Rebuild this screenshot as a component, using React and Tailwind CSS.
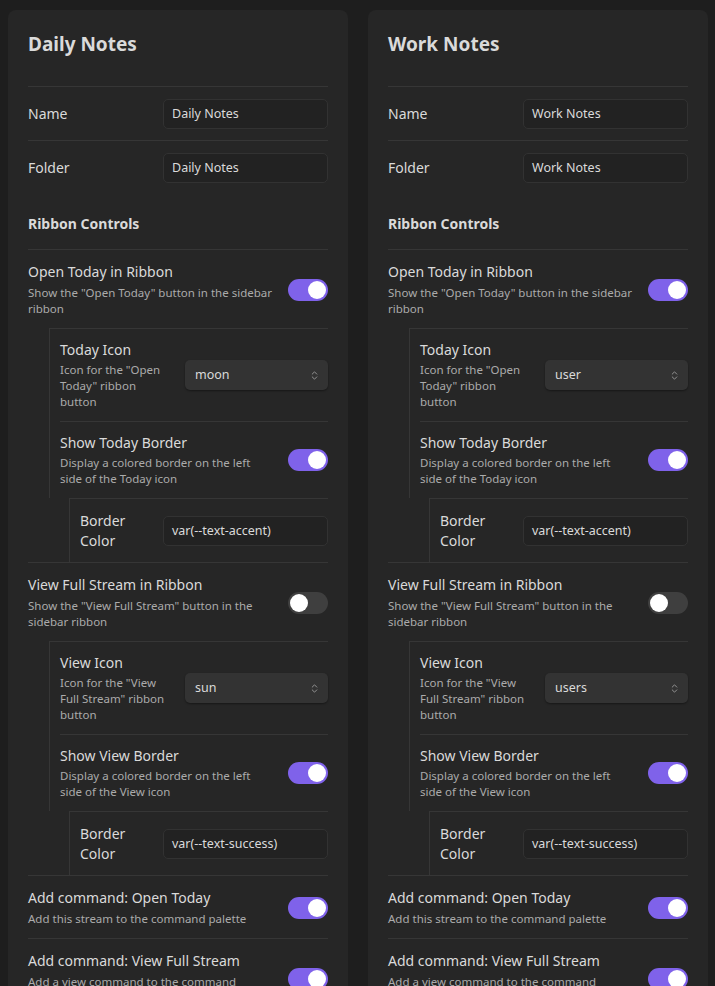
import { ChevronsUpDown } from "lucide-react";

const Toggle = ({ on }) => (
  <div
    className={`flex h-[22px] w-10 shrink-0 items-center rounded-full p-[2px] ${
      on ? "justify-end bg-[#7f62ea]" : "justify-start bg-[#3f3f3f]"
    }`}
  >
    <div className="h-[18px] w-[18px] rounded-full bg-white" />
  </div>
);

const TextInput = ({ value }) => (
  <div className="flex h-[30px] w-[165px] shrink-0 items-center rounded-[5px] border border-[#323232] bg-[#222222] px-2 text-[12.5px] text-[#dadada]">
    {value}
  </div>
);

const Select = ({ value }) => (
  <div className="flex h-[30px] w-[143px] shrink-0 items-center justify-between rounded-[5px] bg-[#333333] pl-[10px] pr-2 text-[12.5px] text-[#dadada] shadow-[0_1px_2px_rgba(0,0,0,0.4)]">
    <span>{value}</span>
    <ChevronsUpDown size={11} strokeWidth={2} className="text-[#9a9a9a]" />
  </div>
);

// nested rows sit a little tighter than the top level ones
const Setting = ({ title, desc, control, border = true, nested = false }) => (
  <div
    className={`flex items-center gap-4 ${nested ? "py-[11px]" : "pt-3 pb-[11px]"} ${
      border ? "border-t border-[#363636]" : ""
    }`}
  >
    <div className="min-w-0 flex-1">
      {title.map((t) => (
        <div key={t} className="whitespace-nowrap text-[14px] leading-5 text-[#dadada]">
          {t}
        </div>
      ))}
      {desc && (
        <div
          className={`${nested ? "mt-[2px]" : "mt-[3px]"} text-[11.5px] leading-4 text-[#ababab]`}
        >
          {desc.map((d) => (
            <div key={d} className="whitespace-nowrap">
              {d}
            </div>
          ))}
        </div>
      )}
    </div>
    {control}
  </div>
);

const Group = ({ inner, children }) => (
  <div
    className={`border-l border-t border-[#363636] pl-[10px] ${
      inner ? "ml-[41px]" : "ml-[21px]"
    }`}
  >
    {children}
  </div>
);

const NoteCard = ({ name, todayIcon, viewIcon }) => (
  <div className="w-[340px] shrink-0 rounded-lg bg-[#262626] px-5 pt-5 pb-6">
    <h2 className="mb-7 text-[19px] font-bold leading-7 text-[#dadada]">{name}</h2>

    <Setting title={["Name"]} control={<TextInput value={name} />} />
    <Setting title={["Folder"]} control={<TextInput value={name} />} />

    <div className="pt-5 pb-[15px] text-[14px] font-bold leading-5 text-[#dadada]">
      Ribbon Controls
    </div>

    <Setting
      title={["Open Today in Ribbon"]}
      desc={['Show the "Open Today" button in the sidebar', "ribbon"]}
      control={<Toggle on />}
    />
    <Group>
      <Setting
        nested
        border={false}
        title={["Today Icon"]}
        desc={['Icon for the "Open', 'Today" ribbon', "button"]}
        control={<Select value={todayIcon} />}
      />
      <Setting
        nested
        title={["Show Today Border"]}
        desc={["Display a colored border on the left", "side of the Today icon"]}
        control={<Toggle on />}
      />
    </Group>
    <Group inner>
      <Setting
        border={false}
        title={["Border", "Color"]}
        control={<TextInput value="var(--text-accent)" />}
      />
    </Group>

    <Setting
      title={["View Full Stream in Ribbon"]}
      desc={['Show the "View Full Stream" button in the', "sidebar ribbon"]}
      control={<Toggle on={false} />}
    />
    <Group>
      <Setting
        nested
        border={false}
        title={["View Icon"]}
        desc={['Icon for the "View', 'Full Stream" ribbon', "button"]}
        control={<Select value={viewIcon} />}
      />
      <Setting
        nested
        title={["Show View Border"]}
        desc={["Display a colored border on the left", "side of the View icon"]}
        control={<Toggle on />}
      />
    </Group>
    <Group inner>
      <Setting
        border={false}
        title={["Border", "Color"]}
        control={<TextInput value="var(--text-success)" />}
      />
    </Group>

    <Setting
      title={["Add command: Open Today"]}
      desc={["Add this stream to the command palette"]}
      control={<Toggle on />}
    />
    <Setting
      title={["Add command: View Full Stream"]}
      desc={["Add a view command to the command", "palette"]}
      control={<Toggle on />}
    />
  </div>
);

export default function App() {
  return (
    <div className="flex min-h-screen items-start gap-5 bg-[#1e1e1e] pl-2 pt-[10px] font-['Noto_Sans',sans-serif]">
      <NoteCard name="Daily Notes" todayIcon="moon" viewIcon="sun" />
      <NoteCard name="Work Notes" todayIcon="user" viewIcon="users" />
    </div>
  );
}
